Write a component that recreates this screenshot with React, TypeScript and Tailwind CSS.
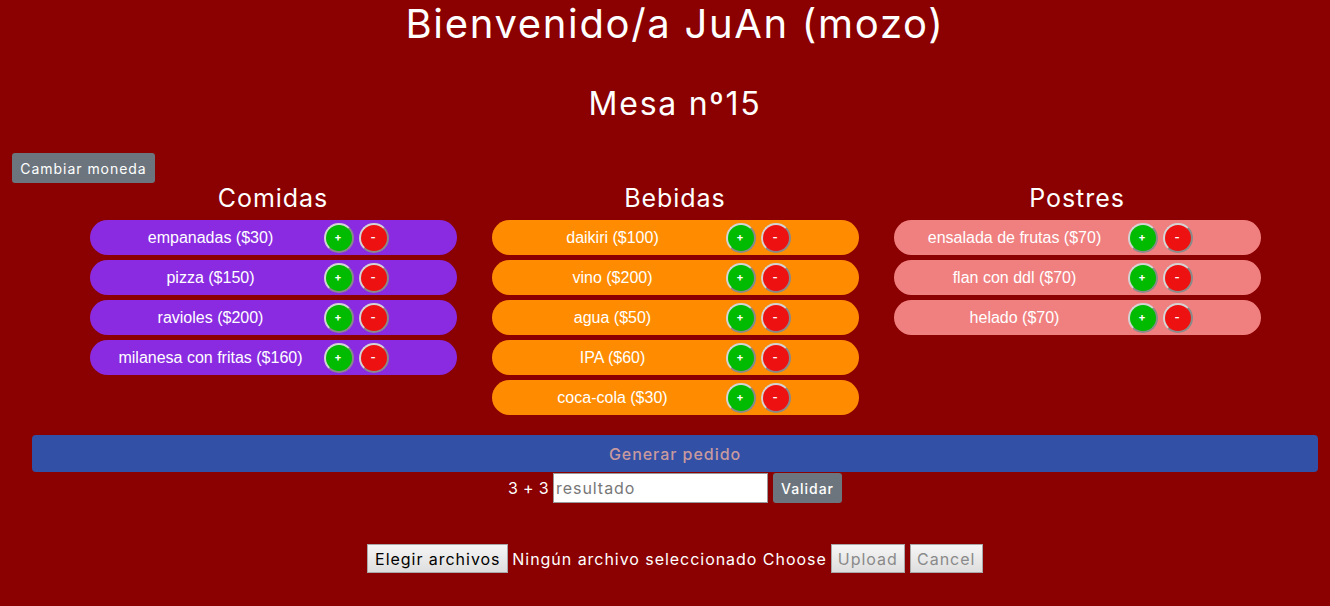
import type { ReactNode } from "react";

type Item = { name: string; price: number };

const COMIDAS: Item[] = [
  { name: "empanadas", price: 30 },
  { name: "pizza", price: 150 },
  { name: "ravioles", price: 200 },
  { name: "milanesa con fritas", price: 160 },
];

const BEBIDAS: Item[] = [
  { name: "daikiri", price: 100 },
  { name: "vino", price: 200 },
  { name: "agua", price: 50 },
  { name: "IPA", price: 60 },
  { name: "coca-cola", price: 30 },
];

const POSTRES: Item[] = [
  { name: "ensalada de frutas", price: 70 },
  { name: "flan con ddl", price: 70 },
  { name: "helado", price: 70 },
];

function RoundBtn({ color, children }: { color: string; children: ReactNode }) {
  return (
    <button
      className={`flex h-[30px] w-[30px] items-center justify-center rounded-full border-2 border-[#d4d4d4] border-r-[#8a8a8a] border-b-[#8a8a8a] text-[11px] font-bold leading-none text-white ${color}`}
    >
      {children}
    </button>
  );
}

function ItemRow({ item, bg }: { item: Item; bg: string }) {
  return (
    <div className={`flex h-[35px] w-[367px] items-center rounded-[18px] ${bg}`}>
      <span className="w-[234px] pl-[8px] text-center font-['Liberation_Sans',Arial,sans-serif] text-[16px] tracking-normal text-white">
        {item.name} (${item.price})
      </span>
      <div className="flex gap-[5px]">
        <RoundBtn color="bg-[#00bb00]">+</RoundBtn>
        <RoundBtn color="bg-[#ee1111]">-</RoundBtn>
      </div>
    </div>
  );
}

function Column({ title, items, bg }: { title: string; items: Item[]; bg: string }) {
  return (
    <div className="flex w-[367px] flex-col">
      <h2 className="h-[37px] text-center text-[25px] leading-[30px] text-white">{title}</h2>
      <div className="flex flex-col gap-[5px]">
        {items.map((it) => (
          <ItemRow key={it.name} item={it} bg={bg} />
        ))}
      </div>
    </div>
  );
}

export default function App() {
  return (
    <div className="min-h-[606px] bg-[#8b0000] font-['Inter','Noto_Sans',sans-serif] tracking-[0.06em] text-white">
      <div className="pl-[20px] text-center">
        <h1 className="text-[40px] leading-[48px] tracking-[0.042em]">Bienvenido/a JuAn (mozo)</h1>
        <h2 className="mt-[38px] text-[32px] leading-[36px] tracking-[0.054em]">Mesa nº15</h2>
      </div>

      <div className="px-[12px] pt-[31px]">
        <button className="h-[30px] w-[143px] rounded-[3px] bg-[#6c757d] text-[14px] text-white">
          Cambiar moneda
        </button>
      </div>

      <div className="pl-[20px]">
        <div className="flex items-start justify-center gap-[35px]">
          <Column title="Comidas" items={COMIDAS} bg="bg-[#8a2be2]" />
          <Column title="Bebidas" items={BEBIDAS} bg="bg-[#ff8c00]" />
          <Column title="Postres" items={POSTRES} bg="bg-[#f08080]" />
        </div>

        <div className="mx-[12px] mt-[20px]">
          <button className="h-[37px] w-full rounded-[4px] bg-[#3150a6] text-[16px] font-medium text-[#c89a9e]">
            Generar pedido
          </button>
        </div>

        <div className="mt-[1px] flex items-center justify-center">
          <span className="mr-[4px] text-[16px] tracking-[0.02em]">3 + 3</span>
          <input
            placeholder="resultado"
            className="h-[30px] w-[215px] border border-[#999] bg-white px-[2px] text-[16px] text-black placeholder:text-[#777]"
          />
          <button className="ml-[5px] h-[30px] w-[69px] rounded-[3px] bg-[#6c757d] text-[14px] font-medium text-white">
            Validar
          </button>
        </div>

        <div className="mt-[41px] flex items-center justify-center">
          <button className="h-[29px] w-[141px] border border-[#a9a9a9] bg-gradient-to-b from-[#f6f6f6] to-[#dedede] text-[16px] text-black">
            Elegir archivos
          </button>
          <span className="mx-[4px] text-[16px]">Ningún archivo seleccionado Choose</span>
          <button
            disabled
            className="h-[29px] w-[74px] border border-[#a9a9a9] bg-gradient-to-b from-[#f6f6f6] to-[#dedede] text-[16px] text-[#8a8a8a]"
          >
            Upload
          </button>
          <button
            disabled
            className="ml-[5px] h-[29px] w-[73px] border border-[#a9a9a9] bg-gradient-to-b from-[#f6f6f6] to-[#dedede] text-[16px] text-[#8a8a8a]"
          >
            Cancel
          </button>
        </div>
      </div>
    </div>
  );
}
